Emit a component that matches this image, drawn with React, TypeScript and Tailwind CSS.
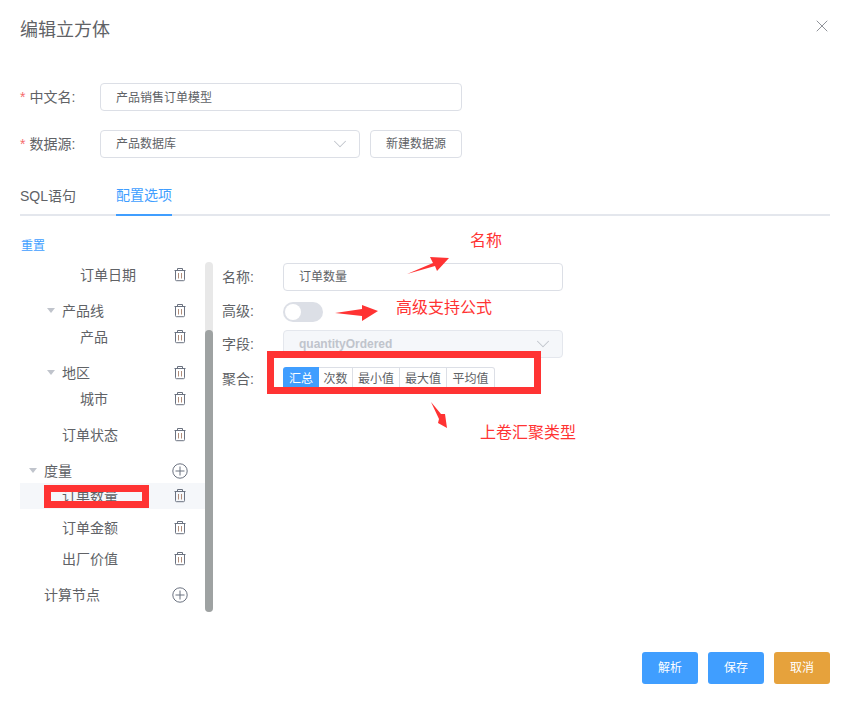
import { X, ChevronDown } from "lucide-react";

const font = "font-['Liberation_Sans','Noto_Sans_CJK_SC',sans-serif]";

function TrashIcon() {
  return (
    <svg className="mb-[2px]" width="14" height="15" viewBox="0 0 14 15" fill="none" stroke="#6b7280" strokeWidth="1">
      <path d="M1.5 3.5h11" />
      <path d="M4.5 3.5V1.5h5v2" />
      <path d="M2.5 3.5v9.2a1 1 0 0 0 1 1h7a1 1 0 0 0 1-1V3.5" />
      <path d="M5.5 6v5.5M8.5 6v5.5" stroke="#b08d7a" />
    </svg>
  );
}

function PlusIcon() {
  return (
    <svg width="16" height="16" viewBox="0 0 16 16" fill="none" stroke="#6b7280" strokeWidth="1">
      <circle cx="8" cy="8" r="7.2" />
      <path d="M8 3.5v9M3.5 8h9" />
    </svg>
  );
}

function Caret() {
  return <span className="w-0 h-0 mb-[2px] border-x-[4px] border-x-transparent border-t-[5px] border-t-[#c0c4cc]" />;
}

function TreeRow({ label, indent, caret, plus, className }: { label: string; indent: string; caret?: boolean; plus?: boolean; className?: string }) {
  return (
    <div className={`h-[26px] flex items-center justify-between pr-[18px] ${className ?? ""}`}>
      <div className={`flex items-center ${indent}`}>
        {caret && <span className="w-[18px] flex items-center pl-[3px]"><Caret /></span>}
        <span className="text-[14px] text-[#606266]">{label}</span>
      </div>
      {plus ? <span className="flex mr-[-1px]"><PlusIcon /></span> : <TrashIcon />}
    </div>
  );
}

function FormLabel({ text }: { text: string }) {
  return (
    <div className="w-[80px] text-[14px] text-[#606266]">
      <span className="text-[#f56c6c] mr-[4px]">*</span>
      {text}:
    </div>
  );
}

function Segment({ label, width, active, last }: { label: string; width: string; active?: boolean; last?: boolean }) {
  return (
    <div
      className={`${width} h-[24px] flex items-center justify-center text-[12px] ${
        active ? "bg-[#409eff] text-white rounded-l-[3px]" : "text-[#606266] border border-l-0 border-[#dcdfe6]"
      } ${last ? "rounded-r-[3px]" : ""}`}
    >
      {label}
    </div>
  );
}

export default function App() {
  return (
    <div className={`relative w-[841px] h-[703px] bg-white pl-[20px] pr-[11px] overflow-hidden ${font}`}>
      {/* Header */}
      <div className="h-[60px] flex items-center justify-between mr-[-2px]">
        <span className="text-[18px] text-[#606266]">编辑立方体</span>
        <X size={20} strokeWidth={1.2} className="text-[#909399] mb-[8px]" />
      </div>

      {/* Form */}
      <div className="mt-[23px] flex items-center">
        <FormLabel text="中文名" />
        <div className="w-[362px] h-[28px] border border-[#dcdfe6] rounded-[4px] pl-[15px] pt-[1px] flex items-center text-[12px] text-[#606266]">
          产品销售订单模型
        </div>
      </div>
      <div className="mt-[19px] flex items-center">
        <FormLabel text="数据源" />
        <div className="w-[260px] h-[28px] border border-[#dcdfe6] rounded-[4px] pl-[15px] pr-[8px] flex items-center justify-between text-[12px] text-[#606266]">
          产品数据库
          <ChevronDown size={22} strokeWidth={1.1} className="text-[#c0c4cc]" />
        </div>
        <div className="ml-[10px] w-[92px] h-[28px] border border-[#dcdfe6] rounded-[4px] flex items-center justify-center text-[12px] text-[#606266]">
          新建数据源
        </div>
      </div>

      {/* Tabs */}
      <div className="mt-[20px] h-[38px] border-b-2 border-[#e4e7ed] flex gap-[40px]">
        <div className="h-[38px] pb-[2px] flex items-center text-[14px] text-[#606266]">SQL语句</div>
        <div className="h-[38px] pb-[2px] flex items-center text-[14px] text-[#409eff] border-b-2 border-[#409eff]">配置选项</div>
      </div>

      <div className="mt-[21px] pl-[1px] text-[12px] leading-[18px] text-[#409eff]">重置</div>

      {/* Tree and detail */}
      <div className="mt-[7px] flex h-[350px]">
        <div className="w-[185px]">
          <TreeRow label="订单日期" indent="pl-[60px]" />
          <TreeRow label="产品线" indent="pl-[24px]" caret className="mt-[10px]" />
          <TreeRow label="产品" indent="pl-[60px]" />
          <TreeRow label="地区" indent="pl-[24px]" caret className="mt-[10px]" />
          <TreeRow label="城市" indent="pl-[60px]" />
          <TreeRow label="订单状态" indent="pl-[42px]" className="mt-[10px]" />
          <TreeRow label="度量" indent="pl-[6px]" caret plus className="mt-[10px]" />
          <TreeRow label="订单数量" indent="pl-[42px]" className="bg-[#f5f7fa] mt-[-1px]" />
          <TreeRow label="订单金额" indent="pl-[42px]" className="mt-[6px]" />
          <TreeRow label="出厂价值" indent="pl-[42px]" className="mt-[5px]" />
          <TreeRow label="计算节点" indent="pl-[24px]" plus className="mt-[10px]" />
        </div>

        <div className="w-[8px] h-full bg-[#e8e8e8] rounded-[4px] flex flex-col">
          <div className="mt-[68px] flex-1 bg-[#9ea2a2] rounded-[4px]" />
        </div>

        <div className="ml-[9px] flex-1 text-[14px] text-[#606266]">
          <div className="mt-[1px] flex items-center">
            <div className="w-[61px]">名称:</div>
            <div className="w-[280px] h-[28px] border border-[#dcdfe6] rounded-[4px] pl-[15px] flex items-center text-[12px]">订单数量</div>
          </div>
          <div className="mt-[10px] flex items-center">
            <div className="w-[61px]">高级:</div>
            <div className="w-[40px] h-[20px] rounded-full bg-[#dcdfe6] flex items-center pl-[2px]">
              <div className="w-[16px] h-[16px] rounded-full bg-white" />
            </div>
          </div>
          <div className="mt-[8px] flex items-center">
            <div className="w-[61px]">字段:</div>
            <div className="w-[280px] h-[28px] border border-[#e4e7ed] bg-[#f5f7fa] rounded-[4px] pl-[15px] pr-[8px] flex items-center justify-between text-[12px] font-bold text-[#c0c4cc]">
              quantityOrdered
              <ChevronDown size={22} strokeWidth={1.1} className="text-[#c0c4cc]" />
            </div>
          </div>
          <div className="mt-[9px] flex items-center">
            <div className="w-[61px]">聚合:</div>
            <div className="flex">
              <Segment label="汇总" width="w-[36px]" active />
              <Segment label="次数" width="w-[34px]" />
              <Segment label="最小值" width="w-[47px]" />
              <Segment label="最大值" width="w-[47px]" />
              <Segment label="平均值" width="w-[48px]" last />
            </div>
          </div>
        </div>
      </div>

      {/* Footer */}
      <div className="mt-[40px] flex justify-end gap-[10px]">
        <div className="w-[56px] h-[32px] rounded-[3px] bg-[#409eff] text-white text-[12px] flex items-center justify-center">解析</div>
        <div className="w-[56px] h-[32px] rounded-[3px] bg-[#409eff] text-white text-[12px] flex items-center justify-center">保存</div>
        <div className="w-[56px] h-[32px] rounded-[3px] bg-[#e6a23c] text-white text-[12px] flex items-center justify-center">取消</div>
      </div>

      {/* Red annotations drawn over the screenshot */}
      <div className="absolute left-[44px] top-[485px] w-[105px] h-[23px] border-[7px] border-[#ff3333]" />
      <div className="absolute left-[267px] top-[351px] w-[274px] h-[43px] border-[7px] border-[#ff3333]" />
      <svg className="absolute left-0 top-0" width="841" height="703" fill="#ff3333">
        <polygon points="407,274 433,263 430,257 449,258 437,271 435,266" />
        <polygon points="335,313 362,309 362,305 378,311 362,321 362,316" />
        <polygon points="431,402 441,414 445,414 447,428 438,423 439,419" />
      </svg>
      <span className="absolute left-[470px] top-[229px] text-[16px] leading-[24px] text-[#ff3333]">名称</span>
      <span className="absolute left-[396px] top-[296px] text-[16px] leading-[24px] text-[#ff3333]">高级支持公式</span>
      <span className="absolute left-[480px] top-[421px] text-[16px] leading-[24px] text-[#ff3333]">上卷汇聚类型</span>
    </div>
  );
}
